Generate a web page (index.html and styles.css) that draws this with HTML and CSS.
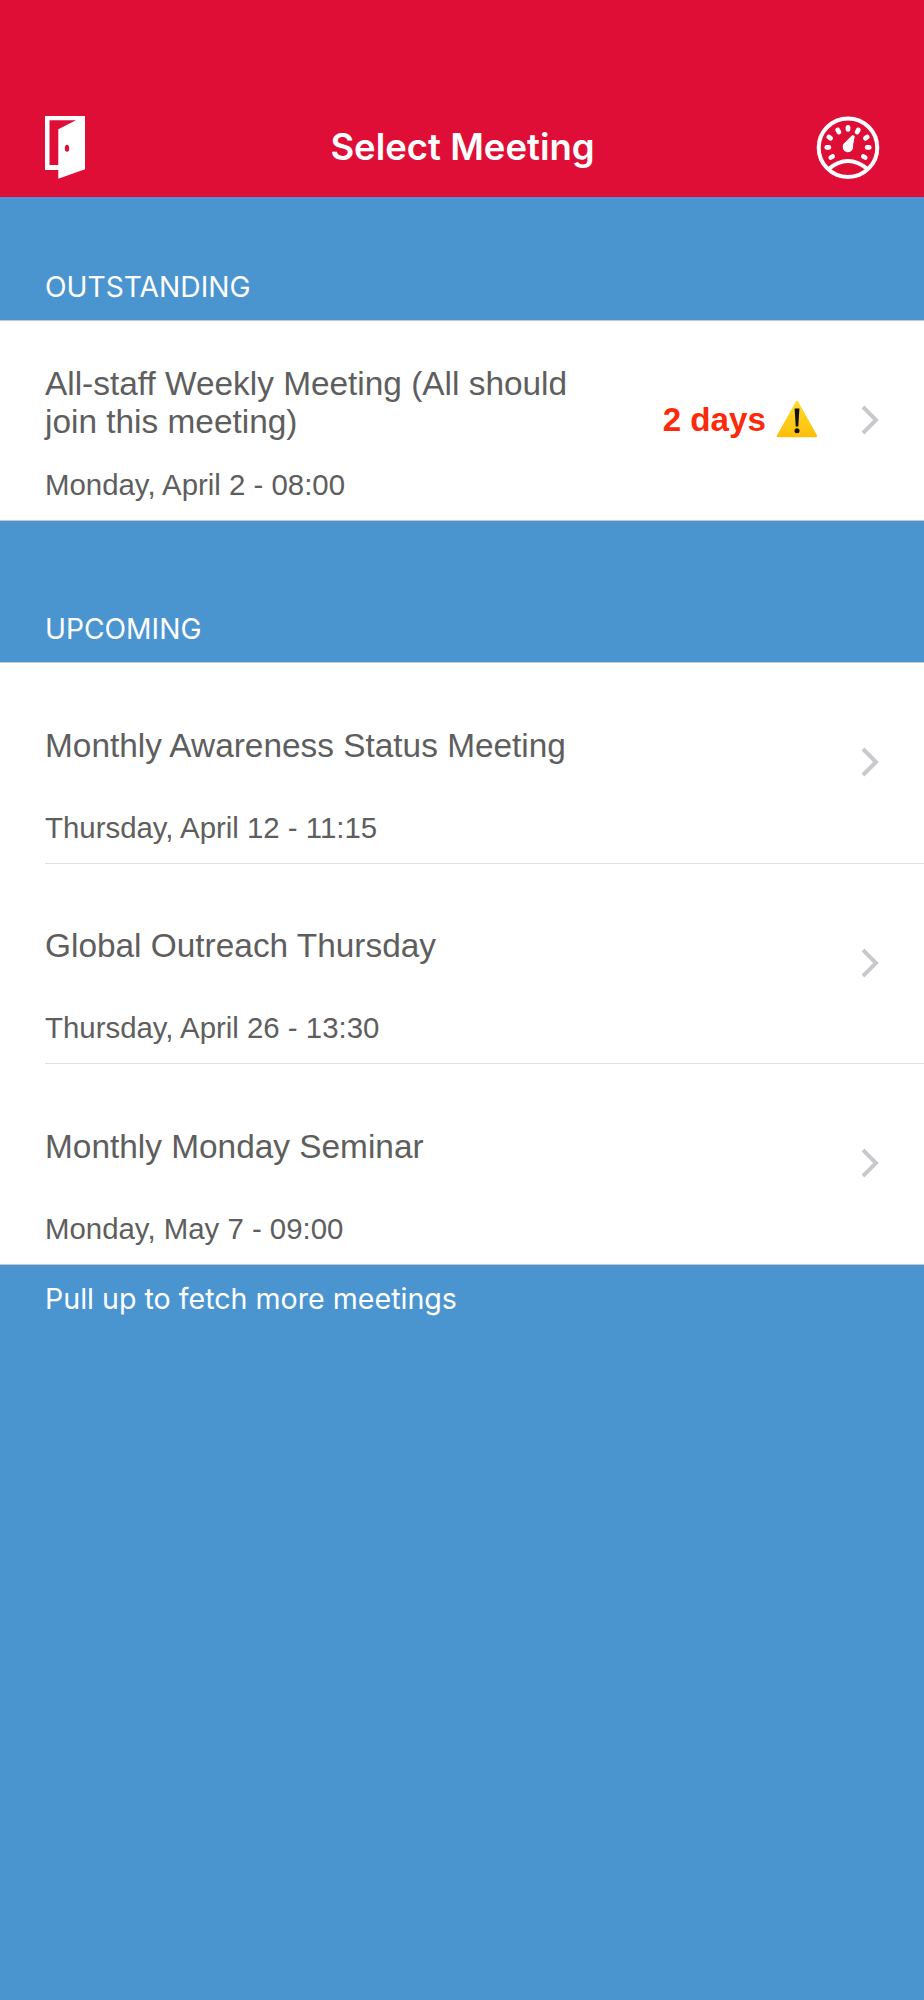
FILE: index.html
```html
<!DOCTYPE html>
<html lang="en">
<head>
    <meta charset="UTF-8">
    <meta name="viewport" content="width=device-width, initial-scale=1.0">
    <title>Select Meeting</title>
    <link rel="stylesheet" href="styles.css">
</head>
<body>
    <header class="topbar">
        <svg class="door-icon" width="40" height="63" viewBox="0 0 40 63">
            <path fill="#fff" fill-rule="evenodd" d="M0 0H40V53.300L13.300 62.800V54H0ZM4.500 4.300V49H13.300V13.300L31 4.300Z"/>
            <ellipse cx="22" cy="32.300" rx="2.200" ry="3.500" fill="#df0e36"/>
        </svg>
        <h1 class="topbar-title">Select Meeting</h1>
        <svg class="gauge-icon" width="64" height="64" viewBox="0 0 64 64">
            <g transform="translate(0 .7)">
                <circle cx="32" cy="32" r="29.300" fill="none" stroke="#fff" stroke-width="4"/>
                <path d="M12 53.700Q32 36.900 52 53.700" fill="none" stroke="#fff" stroke-width="4"/>
                <g stroke="#fff" stroke-width="4.800" stroke-linecap="round">
                    <path d="M32 11.700V13.700"/>
                    <path d="M21.800 14.300L22.800 16.300"/>
                    <path d="M42.200 14.300L41.200 16.300"/>
                    <path d="M12.800 21.300L14.600 22.500"/>
                    <path d="M51.200 21.300L49.400 22.500"/>
                    <path d="M10.800 31.700H12.800"/>
                    <path d="M51.200 31.700H53.200"/>
                    <path d="M14.800 41.800L16.600 40.800"/>
                    <path d="M49.200 41.800L47.400 40.800"/>
                </g>
                <path fill="#fff" d="M38.800 20.400L37 29.800A5.300 5.300 0 1 1 27.400 28.400L36.400 19.200Z"/>
            </g>
        </svg>
    </header>

    <main>
        <h2 class="section-label section-first">OUTSTANDING</h2>
        <ul class="meeting-list">
            <li class="meeting meeting-single">
                <div class="meeting-text">
                    <p class="meeting-title meeting-title-wrap">All-staff Weekly Meeting (All should join this meeting)</p>
                    <p class="meeting-date">Monday, April 2 - 08:00</p>
                </div>
                <span class="due">2 days</span>
                <svg class="warn-icon" width="42" height="38" viewBox="0 0 42 38">
                    <defs>
                        <linearGradient id="warnFill" x1="0" y1="0" x2="0" y2="1">
                            <stop offset="0" stop-color="#ffdc2e"/>
                            <stop offset="1" stop-color="#fdbf0a"/>
                        </linearGradient>
                    </defs>
                    <path fill="url(#warnFill)" stroke="url(#warnFill)" stroke-width="2.500" stroke-linejoin="round" d="M21 2L40 36H2Z"/>
                    <path fill="#111" d="M18.600 8.500H23.400L22.300 26.500H19.700Z"/>
                    <circle cx="21" cy="30.700" r="2.500" fill="#111"/>
                </svg>
                <svg class="chevron" width="20" height="30" viewBox="0 0 20 30"><path d="M3 2L16 15L3 28" fill="none" stroke="#c8c8cd" stroke-width="4"/></svg>
            </li>
        </ul>

        <h2 class="section-label section-second">UPCOMING</h2>
        <ul class="meeting-list">
            <li class="meeting">
                <div class="meeting-text">
                    <p class="meeting-title">Monthly Awareness Status Meeting</p>
                    <p class="meeting-date">Thursday, April 12 - 11:15</p>
                </div>
                <svg class="chevron" width="20" height="30" viewBox="0 0 20 30"><path d="M3 2L16 15L3 28" fill="none" stroke="#c8c8cd" stroke-width="4"/></svg>
            </li>
            <li class="meeting">
                <div class="meeting-text">
                    <p class="meeting-title">Global Outreach Thursday</p>
                    <p class="meeting-date">Thursday, April 26 - 13:30</p>
                </div>
                <svg class="chevron" width="20" height="30" viewBox="0 0 20 30"><path d="M3 2L16 15L3 28" fill="none" stroke="#c8c8cd" stroke-width="4"/></svg>
            </li>
            <li class="meeting">
                <div class="meeting-text">
                    <p class="meeting-title">Monthly Monday Seminar</p>
                    <p class="meeting-date">Monday, May 7 - 09:00</p>
                </div>
                <svg class="chevron" width="20" height="30" viewBox="0 0 20 30"><path d="M3 2L16 15L3 28" fill="none" stroke="#c8c8cd" stroke-width="4"/></svg>
            </li>
        </ul>
        <p class="pull-hint">Pull up to fetch more meetings</p>
    </main>
</body>
</html>
```

FILE: styles.css
```css
html, body {
    margin: 0;
    padding: 0;
}
body {
    height: 2000px;
    overflow: hidden;
    font-family: "Liberation Sans", Arial, sans-serif;
    background-color: #4a95cf;
    color: #fff;
}
.topbar {
    height: 197px;
    box-sizing: border-box;
    padding: 0 44px 18px 45px;
    display: grid;
    grid-template-columns: 1fr auto 1fr;
    align-items: end;
    background-color: #df0e36;
}
.gauge-icon {
    justify-self: end;
}
.topbar-title {
    margin: 0 0 10px;
    font-family: Inter, sans-serif;
    font-size: 36.500px;
    line-height: 44px;
    font-weight: 600;
}
.section-label {
    margin: 0;
    padding-left: 45px;
    font-family: Inter, sans-serif;
    font-size: 28.200px;
    line-height: 34px;
    font-weight: 400;
}
.section-first {
    padding-top: 73px;
    padding-bottom: 16px;
}
.section-second {
    padding-top: 91px;
    padding-bottom: 16px;
}
.meeting-list {
    margin: 0;
    padding: 0;
    list-style: none;
    background-color: #fff;
    border-top: 1px solid #c0c8d0;
    border-bottom: 1px solid #c0c8d0;
}
.meeting {
    height: 200px;
    box-sizing: border-box;
    margin-left: 45px;
    padding-right: 44px;
    display: flex;
    align-items: center;
    color: #5e5e5e;
}
.meeting-single {
    height: 199px;
}
.meeting + .meeting {
    border-top: 1px solid #dfdfe1;
}
.meeting:last-child:not(.meeting-single) {
    height: 201px;
}
.meeting-text {
    flex: 1;
    min-width: 0;
    align-self: stretch;
    display: flex;
    flex-direction: column;
    justify-content: flex-end;
    padding-bottom: 18px;
}
.meeting-title {
    margin: 0 0 47px;
    font-size: 33.400px;
    line-height: 37px;
}
.meeting-title-wrap {
    width: 540px;
    line-height: 38px;
    margin-bottom: 27px;
}
.meeting-date {
    margin: 0;
    font-size: 29.400px;
    line-height: 34px;
}
.due {
    font-size: 33.200px;
    font-weight: 700;
    color: #fb2a0a;
    margin: 0 10px 1px 0;
}
.warn-icon {
    margin: 0 42px 3px 0;
}
.chevron {
    flex: none;
    margin-bottom: 2px;
}
.pull-hint {
    margin: 0;
    padding: 17px 0 0 45px;
    font-family: Inter, sans-serif;
    font-size: 28.600px;
    line-height: 34px;
}
```
